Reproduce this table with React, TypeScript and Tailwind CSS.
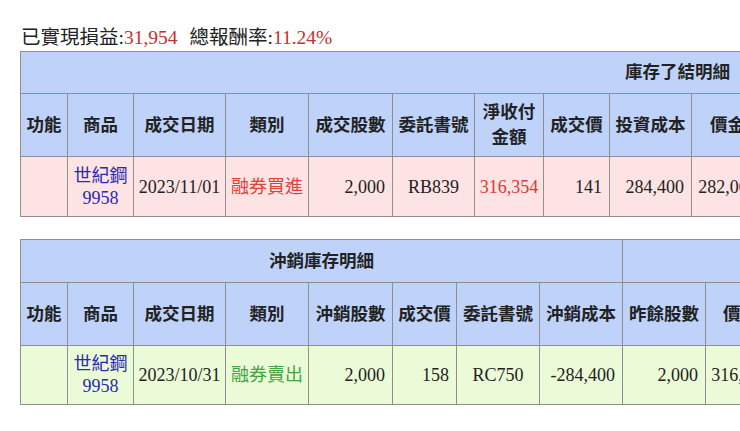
import React from "react";

const serif = { fontFamily: '"Liberation Serif", "Noto Sans CJK TC", serif' };

const th =
  "border border-[#8f8f8f] bg-[#bed2fa] text-[17.5px] font-bold leading-[25px] text-center align-middle whitespace-nowrap";
const td = "border border-[#8f8f8f] text-[18px] leading-[22px] align-middle whitespace-nowrap";
const c = `${td} text-center`;
const r = `${td} text-right pr-[7px]`;

function Cols({ widths }: { widths: number[] }) {
  return (
    <colgroup>
      {widths.map((w, i) => (
        <col key={i} style={{ width: w }} />
      ))}
    </colgroup>
  );
}

export default function App() {
  const cols1 = [47, 66, 92, 83, 84, 82, 69, 66, 82, 72, 70, 70, 90, 70, 80, 90, 101];
  const cols2 = [47, 66, 92, 83, 84, 64, 83, 83, 83, 70, 70, 70, 90];
  const w1 = cols1.reduce((a, b) => a + b, 0);
  const w2 = cols2.reduce((a, b) => a + b, 0);
  return (
    <div className="w-[740px] h-[431px] overflow-hidden bg-white text-[#222]" style={serif}>
      <div className="pl-[21px] pt-[24px] text-[19.5px] leading-[27px] whitespace-nowrap">
        已實現損益:<span className="text-[#c9302c]">31,954</span>
        <span className="inline-block w-[12px]" />
        總報酬率:<span className="text-[#c9302c]">11.24%</span>
      </div>

      <div className="pl-[20px]">
        <table className="table-fixed border-collapse" style={{ width: w1 }}>
          <Cols widths={cols1} />
          <thead>
            <tr className="h-[42px]">
              <th className={th} colSpan={cols1.length}>庫存了結明細</th>
            </tr>
            <tr className="h-[63px]">
              <th className={th}>功能</th>
              <th className={th}>商品</th>
              <th className={th}>成交日期</th>
              <th className={th}>類別</th>
              <th className={th}>成交股數</th>
              <th className={th}>委託書號</th>
              <th className={th}>淨收付<br />金額</th>
              <th className={th}>成交價</th>
              <th className={th}>投資成本</th>
              <th className={th}>價金</th>
              <th className={th}>手續費</th>
              <th className={th}>交易稅</th>
              <th className={th}>融券手續費</th>
              <th className={th}>利息</th>
              <th className={th}>代扣稅款</th>
              <th className={th}>損益</th>
              <th className={th}>報酬率</th>
            </tr>
          </thead>
          <tbody>
            <tr className="h-[60px] bg-[#fde3e3]">
              <td className={td}></td>
              <td className={`${c} text-[#2a2ab0]`}>世紀鋼<br />9958</td>
              <td className={c}>2023/11/01</td>
              <td className={`${c} text-[#e0403a]`}>融券買進</td>
              <td className={r}>2,000</td>
              <td className={c}>RB839</td>
              <td className={`${c} text-[#d93a36]`}>316,354</td>
              <td className={r}>141</td>
              <td className={r}>284,400</td>
              <td className={c}>282,000</td>
              <td className={r}>401</td>
              <td className={r}>0</td>
              <td className={r}>258</td>
              <td className={r}>12</td>
              <td className={r}>0</td>
              <td className={`${r} text-[#d93a36]`}>31,954</td>
              <td className={`${r} text-[#d93a36]`}>11.24%</td>
            </tr>
          </tbody>
        </table>

        <div className="h-[22px]" />

        <table className="table-fixed border-collapse" style={{ width: w2 }}>
          <Cols widths={cols2} />
          <thead>
            <tr className="h-[43px]">
              <th className={th} colSpan={8}>沖銷庫存明細</th>
              <th className={th} colSpan={5}>昨日庫存明細</th>
            </tr>
            <tr className="h-[63px]">
              <th className={th}>功能</th>
              <th className={th}>商品</th>
              <th className={th}>成交日期</th>
              <th className={th}>類別</th>
              <th className={th}>沖銷股數</th>
              <th className={th}>成交價</th>
              <th className={th}>委託書號</th>
              <th className={th}>沖銷成本</th>
              <th className={th}>昨餘股數</th>
              <th className={th}>價金</th>
              <th className={th}>手續費</th>
              <th className={th}>交易稅</th>
              <th className={th}>損益</th>
            </tr>
          </thead>
          <tbody>
            <tr className="h-[59px] bg-[#ebfbd8]">
              <td className={td}></td>
              <td className={`${c} text-[#2a2ab0]`}>世紀鋼<br />9958</td>
              <td className={c}>2023/10/31</td>
              <td className={`${c} text-[#46a23c]`}>融券賣出</td>
              <td className={r}>2,000</td>
              <td className={r}>158</td>
              <td className={c}>RC750</td>
              <td className={r}>-284,400</td>
              <td className={r}>2,000</td>
              <td className={c}>316,000</td>
              <td className={r}>450</td>
              <td className={r}>948</td>
              <td className={r}>0</td>
            </tr>
          </tbody>
        </table>
      </div>
    </div>
  );
}
